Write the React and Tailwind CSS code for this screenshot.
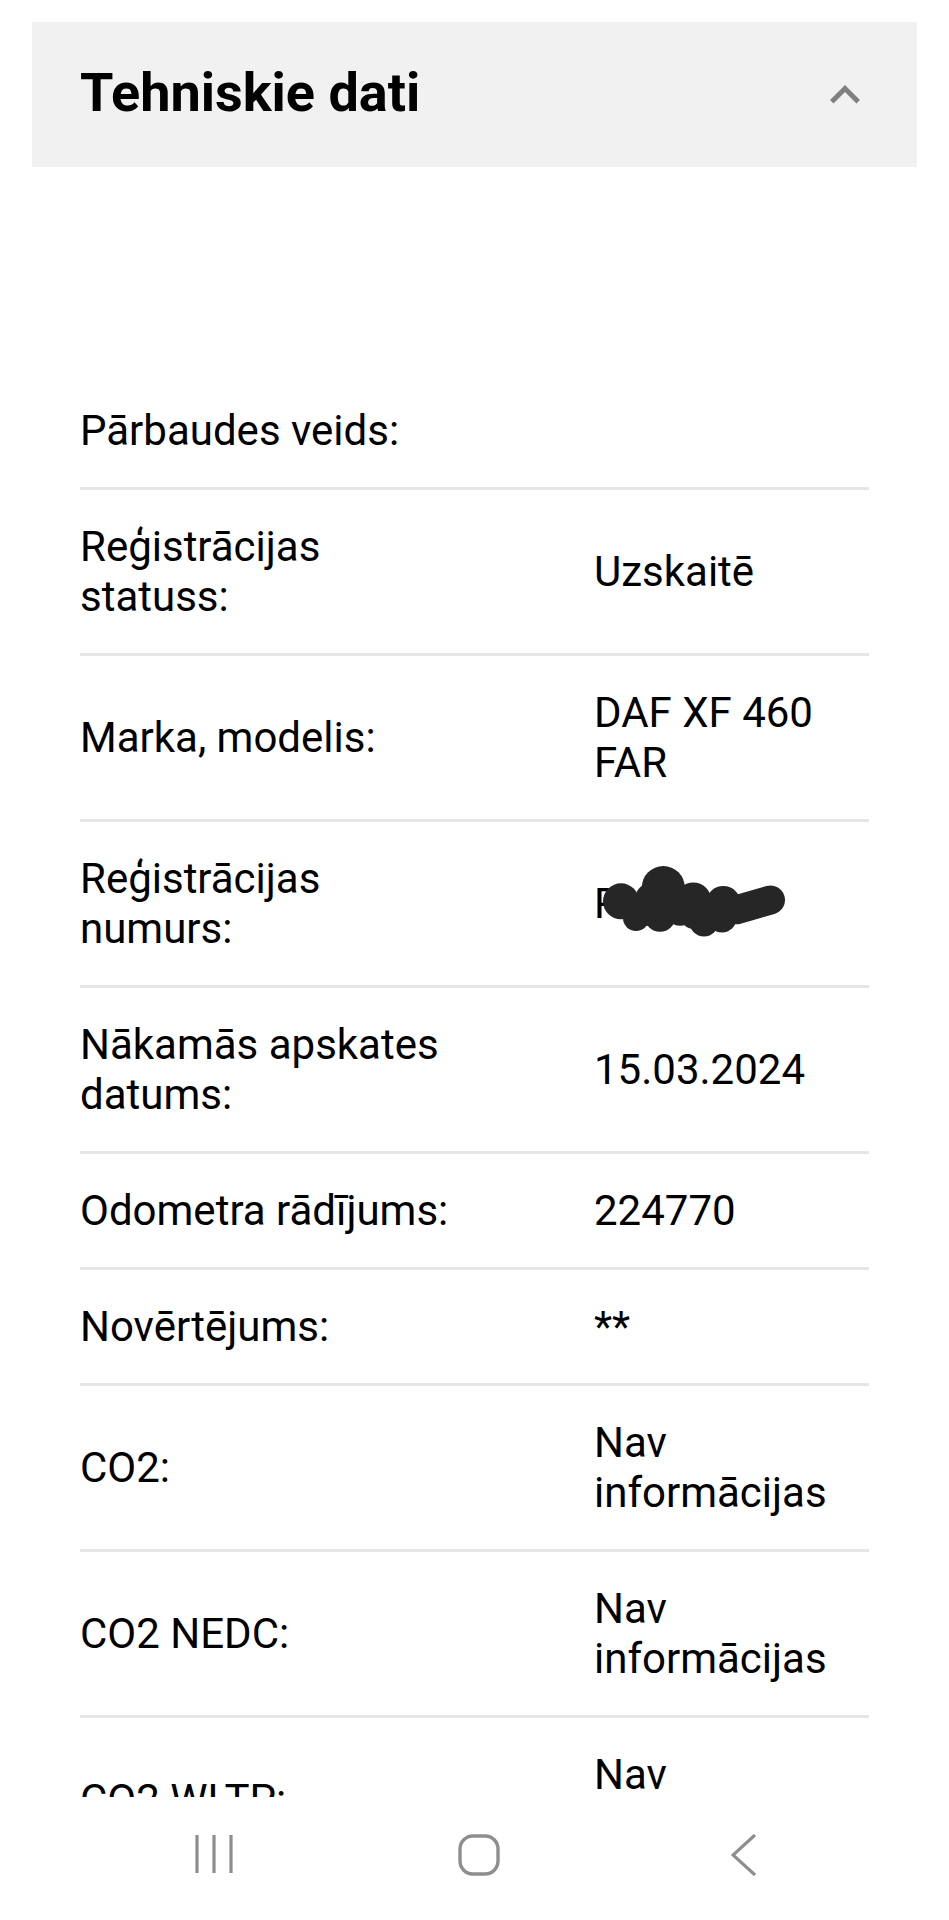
import React from "react";

// Blacked-out registration plate: first letter visible, rest covered by a marker scribble
function Plate() {
  return (
    <div className="relative h-[50px]">
      <span>R</span>
      <svg
        className="absolute left-0 top-[-16px] w-[196px] h-[80px]"
        viewBox="0 0 196 80"
        fill="#262626"
      >
        <circle cx="27" cy="38.3" r="18" />
        <circle cx="42" cy="55" r="13" />
        <circle cx="57.7" cy="36.7" r="17" />
        <circle cx="69.3" cy="24.5" r="21.5" />
        <circle cx="66" cy="53.3" r="15.5" />
        <circle cx="52" cy="50" r="13" />
        <circle cx="86" cy="46.7" r="16" />
        <circle cx="84" cy="33" r="13" />
        <circle cx="99.3" cy="37.5" r="18" />
        <circle cx="110" cy="59" r="14.5" />
        <circle cx="100" cy="52" r="14" />
        <circle cx="129.3" cy="40.5" r="17.5" />
        <circle cx="128" cy="55" r="14.5" />
        <circle cx="116" cy="46" r="15" />
        <line
          x1="142.7"
          y1="46.7"
          x2="176.5"
          y2="37"
          stroke="#262626"
          strokeWidth="29"
          strokeLinecap="round"
        />
      </svg>
    </div>
  );
}

const rows = [
  { label: "Pārbaudes veids:", value: "" },
  { label: "Reģistrācijas statuss:", value: "Uzskaitē" },
  { label: "Marka, modelis:", value: "DAF XF 460 FAR" },
  { label: "Reģistrācijas numurs:", value: <Plate /> },
  { label: "Nākamās apskates datums:", value: "15.03.2024" },
  { label: "Odometra rādījums:", value: "224770" },
  { label: "Novērtējums:", value: "**" },
  { label: "CO2:", value: "Nav informācijas" },
  { label: "CO2 NEDC:", value: "Nav informācijas" },
  { label: "CO2 WLTP:", value: "Nav informācijas" },
];

function ChevronUp() {
  return (
    <svg viewBox="0 0 24 24" className="w-[60px] h-[60px]" fill="#7f7f7f">
      <path d="M12 8l-6 6 1.41 1.41L12 10.83l4.59 4.58L18 14z" />
    </svg>
  );
}

function NavBar() {
  return (
    <div className="flex-1 bg-white flex items-start pt-[37px] pl-[184px] gap-[205px]">
      {/* recent apps */}
      <div className="w-[60px] flex justify-center">
        <svg viewBox="0 0 40 40" className="w-[40px] h-[40px]" stroke="#8e8e8e" strokeWidth="3.2">
          <line x1="3" y1="1" x2="3" y2="39" />
          <line x1="20" y1="1" x2="20" y2="39" />
          <line x1="37" y1="1" x2="37" y2="39" />
        </svg>
      </div>
      {/* home */}
      <div className="w-[60px] flex justify-center">
        <svg viewBox="0 0 42 42" className="w-[42px] h-[42px]" fill="none" stroke="#8e8e8e" strokeWidth="3.4">
          <rect x="2" y="2" width="38" height="38" rx="13" />
        </svg>
      </div>
      {/* back */}
      <div className="w-[60px] flex justify-center">
        <svg viewBox="0 0 26 42" className="w-[26px] h-[42px]" fill="none" stroke="#8e8e8e" strokeWidth="3.2">
          <polyline points="24,1 2,21 24,41" />
        </svg>
      </div>
    </div>
  );
}

export default function App() {
  return (
    <div className="w-[949px] h-[1920px] bg-white flex flex-col overflow-hidden font-['Roboto','Noto_Sans',sans-serif] text-black">
      <div className="h-[1797px] overflow-hidden">
        <div className="mx-[32px] mt-[22px] h-[145px] bg-[#f1f1f1] flex items-center justify-between pl-[48px] pr-[42px]">
          <h2 className="text-[54px] font-bold leading-none mb-[4px]">Tehniskie dati</h2>
          <ChevronUp />
        </div>

        <div className="mx-[80px] mt-[207px]">
          {rows.map((r, i) => (
            <div
              key={i}
              className="flex items-center justify-between pt-[32px] pb-[31px] border-b-[3px] border-[#e6e6e6] text-[42px] leading-[50px]"
            >
              <div className="w-[385px]">{r.label}</div>
              <div className="w-[275px]">{r.value}</div>
            </div>
          ))}
        </div>
      </div>
      <NavBar />
    </div>
  );
}
